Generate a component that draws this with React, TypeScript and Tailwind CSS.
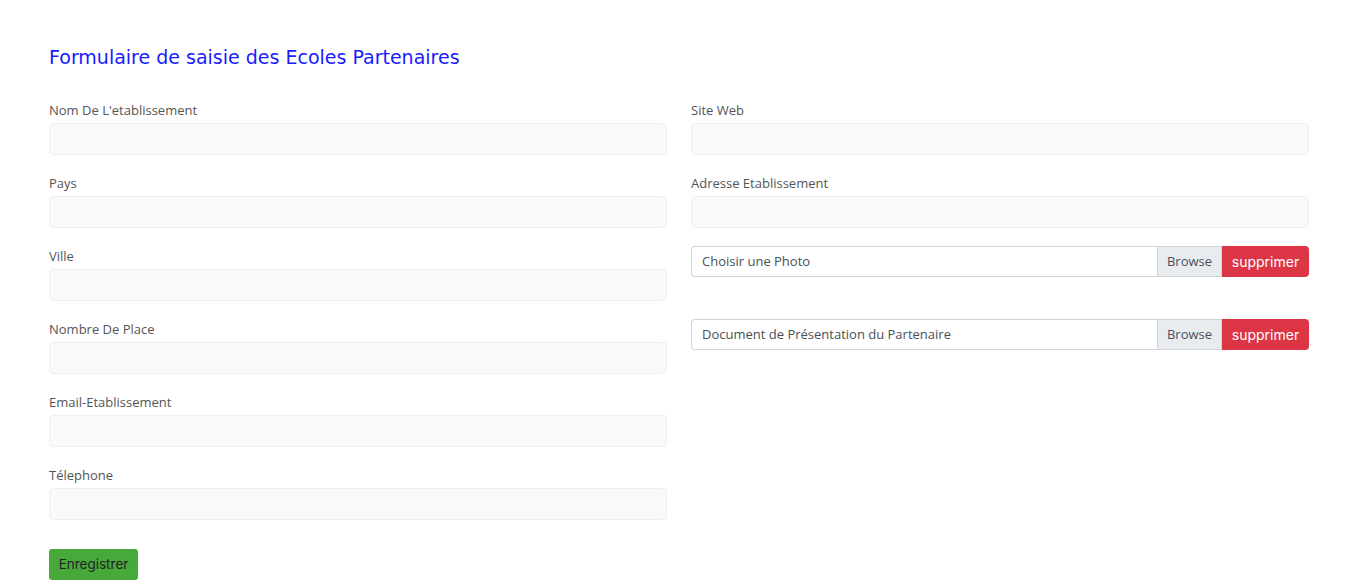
import React from "react";

const leftFields = [
  "Nom De L'etablissement",
  "Pays",
  "Ville",
  "Nombre De Place",
  "Email-Etablissement",
  "Télephone",
];

const rightFields = ["Site Web", "Adresse Etablissement"];

function Field({ label }: { label: string }) {
  return (
    <div className="mb-[18px]">
      <label className="block h-5 mb-[3px] text-[13px] leading-5 text-[#555555]">{label}</label>
      <input
        type="text"
        className="block h-8 w-full rounded-[4px] border border-[#efefef] bg-[#f9f9f9] px-3 outline-none"
      />
    </div>
  );
}

function FileField({ placeholder }: { placeholder: string }) {
  return (
    <div className="flex h-[31px] w-full">
      <div className="flex flex-1 items-center rounded-l-[4px] border border-r-0 border-[#ced4da] bg-white px-[10px] text-[13px] text-[#495057]">
        {placeholder}
      </div>
      <div className="flex w-[65px] items-center justify-center border border-[#ced4da] bg-[#e9ecef] text-[13px] text-[#495057]">
        Browse
      </div>
      <button
        type="button"
        className="flex w-[87px] items-center justify-center rounded-r-[4px] bg-[#dc3545] text-[14px] text-white font-['Inter',sans-serif]"
      >
        supprimer
      </button>
    </div>
  );
}

export default function App() {
  return (
    <div className="min-h-screen bg-white px-[49px] pt-[45px] font-['Open_Sans',sans-serif]">
      <h2 className="mb-[31px] h-6 text-[19px] leading-6 text-[#1a1aff] font-['DejaVu_Sans',sans-serif]">
        Formulaire de saisie des Ecoles Partenaires
      </h2>
      <div className="grid grid-cols-2 gap-x-6">
        <div>
          {leftFields.map((f) => (
            <Field key={f} label={f} />
          ))}
        </div>
        <div>
          {rightFields.map((f) => (
            <Field key={f} label={f} />
          ))}
          <div className="mb-[42px]">
            <FileField placeholder="Choisir une Photo" />
          </div>
          <FileField placeholder="Document de Présentation du Partenaire" />
        </div>
      </div>
      <button
        type="button"
        className="mt-[11px] h-[31px] w-[89px] rounded-[3px] bg-[#47a93a] text-[13.5px] text-[#222] font-['Inter',sans-serif]"
      >
        Enregistrer
      </button>
    </div>
  );
}
